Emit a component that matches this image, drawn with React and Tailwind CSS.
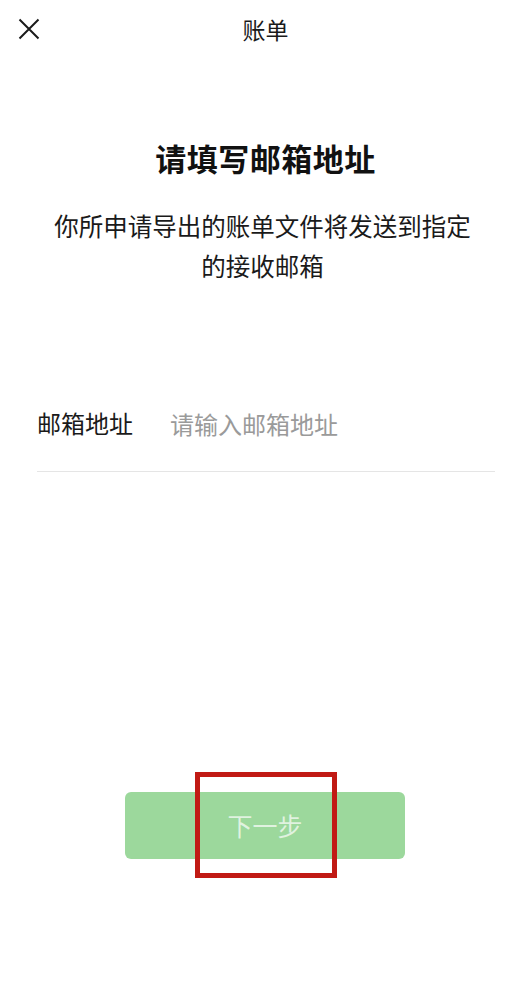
import React from 'react';

const FONT = '"Noto Sans CJK SC", "Noto Sans", sans-serif';

export default function App() {
  return (
    <div
      className="relative w-[531px] h-[1000px] bg-white text-[#111]"
      style={{ fontFamily: FONT }}
    >
      {/* ── 顶部导航 ── */}
      <div className="relative h-[60px] flex items-center justify-center">
        <button className="absolute left-[18px] top-[18px] w-[22px] h-[22px] flex items-center justify-center">
          <svg width="22" height="22" viewBox="0 0 22 22" fill="none">
            <path d="M1.5 1.5 L20.5 20.5 M20.5 1.5 L1.5 20.5" stroke="#1a1a1a" strokeWidth="2" />
          </svg>
        </button>
        <h1 className="text-[23px] leading-none text-[#1a1a1a] mt-[-2px]">账单</h1>
      </div>

      {/* ── 标题 ── */}
      <div className="pt-[78px] flex flex-col items-center">
        <h2 className="text-[31px] leading-[40px] font-semibold tracking-[0.5px]">请填写邮箱地址</h2>
        <p className="mt-[28px] ml-[-6px] w-[430px] text-center text-[24.5px] leading-[40px] text-[#1a1a1a]">
          你所申请导出的账单文件将发送到指定的接收邮箱
        </p>
      </div>

      {/* ── 输入行 ── */}
      <div className="mt-[112px] mx-[37px] w-[458px] flex items-center h-[50px]">
        <span className="text-[24px] leading-none w-[133px] shrink-0 text-[#1a1a1a]">邮箱地址</span>
        <input
          className="flex-1 text-[24px] leading-none outline-none placeholder:text-[#9a9a9a] bg-transparent"
          style={{ fontFamily: FONT }}
          placeholder="请输入邮箱地址"
        />
      </div>
      <div className="mt-[23px] mx-[37px] w-[458px] h-px bg-[#e5e5e5]" />

      {/* ── 下一步 ── */}
      <div className="mt-[320px] flex justify-center">
        <button className="ml-[-1px] w-[280px] h-[67px] rounded-[6px] bg-[#9cd89c] text-[25px] text-white/70">
          下一步
        </button>
      </div>

      {/* 标注框 */}
      <div className="absolute left-[195px] top-[772px] w-[142px] h-[106px] border-[5px] border-[#c11a14]" />
    </div>
  );
}
